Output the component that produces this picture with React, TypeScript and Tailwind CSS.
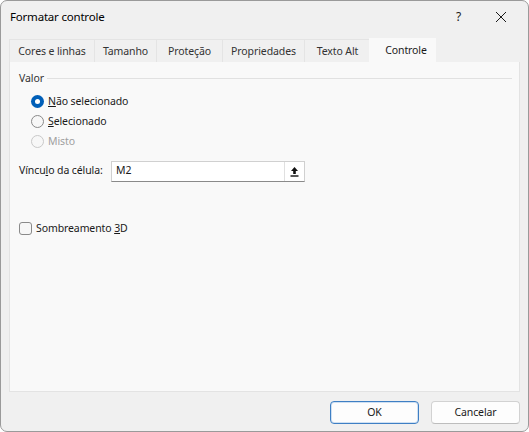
import React from 'react';

const tabs = [
  { label: 'Cores e linhas', w: 'w-[86px]' },
  { label: 'Tamanho', w: 'w-[62px]' },
  { label: 'Proteção', w: 'w-[66px]' },
  { label: 'Propriedades', w: 'w-[82px]' },
  { label: 'Texto Alt', w: 'w-[66px]' },
];

function Radio({ checked, disabled }: { checked?: boolean; disabled?: boolean }) {
  if (checked) {
    return (
      <span className="flex h-[13px] w-[13px] shrink-0 items-center justify-center rounded-full bg-[#005fb8]">
        <span className="h-[5px] w-[5px] rounded-full bg-white" />
      </span>
    );
  }
  return (
    <span
      className={
        disabled
          ? 'h-[13px] w-[13px] shrink-0 rounded-full border border-[#c9c9c9] bg-[#f7f7f7]'
          : 'h-[13px] w-[13px] shrink-0 rounded-full border border-[#8a8a8a] bg-[#f7f7f7]'
      }
    />
  );
}

export default function App() {
  return (
    <div
      className="flex h-[432px] w-[529px] flex-col overflow-hidden rounded-[7px] border border-[#9a9a9a] bg-[#f0f0f0] text-[10.5px] tracking-[-0.1px] text-[#1a1a1a]"
      style={{ fontFamily: '"Noto Sans", "Open Sans", sans-serif' }}
    >
      {/* title bar */}
      <div className="flex h-[32px] shrink-0 items-center pl-[9px]">
        <span className="text-[11.5px] tracking-[-0.2px] text-black">Formatar controle</span>
        <span className="ml-auto mr-[34px] text-[12px]">?</span>
        <svg width="12" height="12" viewBox="0 0 12 12" className="mr-[21px]">
          <path d="M1 1 L11 11 M11 1 L1 11" stroke="#1a1a1a" strokeWidth="1" />
        </svg>
      </div>

      {/* tabs */}
      <div className="mt-[5px] flex h-[24px] shrink-0 items-end px-[8px]">
        {tabs.map((t) => (
          <div
            key={t.label}
            className={`${t.w} flex h-[23px] items-center justify-center border-t border-r border-[#e4e4e4] pt-[1px] text-[#333] first:border-l`}
          >
            {t.label}
          </div>
        ))}
        <div className="-ml-[2px] flex h-[24px] w-[67px] items-center justify-center bg-[#f9f9f9] pl-[7px] pt-[1px] text-[#1a1a1a]">
          Controle
        </div>
      </div>

      {/* panel */}
      <div className="mx-[8px] flex flex-1 flex-col border border-t-0 border-[#e3e3e3] bg-[#f9f9f9] px-[9px] pt-[9px]">
        <div className="flex items-center gap-[3px]">
          <span className="text-[#333]">Valor</span>
          <div className="mr-[-2px] h-px flex-1 bg-[#e1e1e1]" />
        </div>

        <div className="ml-[12px] mt-[8px] flex flex-col gap-[7px] leading-[13px]">
          <label className="flex items-center gap-[4px]">
            <Radio checked />
            <span>
              <span className="underline">N</span>ão selecionado
            </span>
          </label>
          <label className="flex items-center gap-[4px]">
            <Radio />
            <span>
              <span className="underline">S</span>elecionado
            </span>
          </label>
          <label className="flex items-center gap-[4px] text-[#a0a0a0]">
            <Radio disabled />
            <span>Misto</span>
          </label>
        </div>

        <div className="mt-[13px] flex items-center">
          <span className="w-[92px]">
            Víncu<span className="underline">l</span>o da célula:
          </span>
          <div className="flex h-[21px] w-[194px] items-center border border-[#d0d0d0] border-b-[#8a8a8a] bg-white">
            <span className="flex-1 pl-[4px]">M2</span>
            <div className="flex h-full w-[20px] items-center justify-center border-l border-[#e0e0e0]">
              <svg width="9" height="11" viewBox="0 0 9 11">
                <path d="M4.5 1 L1 5 H3.2 V8 H5.8 V5 H8 Z" fill="#111" />
                <rect x="0.5" y="9.3" width="8" height="1.4" fill="#111" />
              </svg>
            </div>
          </div>
        </div>

        <label className="mt-[40px] flex items-center gap-[4px] leading-[13px]">
          <span className="h-[13px] w-[13px] shrink-0 rounded-[3px] border border-[#8a8a8a] bg-[#f7f7f7]" />
          <span>
            Sombreamento <span className="underline">3</span>D
          </span>
        </label>
      </div>

      {/* buttons */}
      <div className="flex shrink-0 items-start justify-end gap-[12px] pb-[7px] pr-[8px] pt-[9px]">
        <button className="h-[23px] w-[89px] rounded-[4px] border border-[#3e7fc4] bg-[#fdfdfd] text-[#1a1a1a] shadow-[inset_0_0_0_1px_#cfe0f2]">
          OK
        </button>
        <button className="h-[23px] w-[89px] rounded-[4px] border border-[#d2d2d2] border-b-[#bdbdbd] bg-[#fdfdfd] text-[#1a1a1a]">
          Cancelar
        </button>
      </div>
    </div>
  );
}
